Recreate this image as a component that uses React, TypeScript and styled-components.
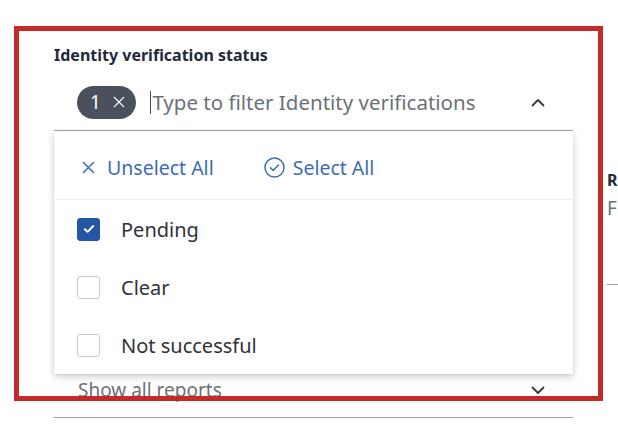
import React from "react";
import styled, { createGlobalStyle } from "styled-components";

const colors = {
  ink: "#1f2a3c",
  text: "#2f3338",
  muted: "#6b7079",
  chip: "#4a505c",
  link: "#3b6db5",
  check: "#2556a5",
  line: "#9aa1ad",
  divider: "#eceef1",
  box: "#c5cad2",
  highlight: "#c42a27",
};

const options = [
  { label: "Pending", checked: true },
  { label: "Clear", checked: false },
  { label: "Not successful", checked: false },
];

const CrossIcon = ({ size = 13, color = "currentColor" }: { size?: number; color?: string }) => (
  <svg width={size} height={size} viewBox="0 0 13 13" fill="none">
    <path d="M1.5 1.5l10 10M11.5 1.5l-10 10" stroke={color} strokeWidth="1.5" strokeLinecap="round" />
  </svg>
);

const CircleCheckIcon = () => (
  <svg width="21" height="21" viewBox="0 0 21 21" fill="none">
    <circle cx="10.5" cy="10.5" r="9.5" stroke="currentColor" strokeWidth="1.5" />
    <path d="M6.5 10.8l2.7 2.6 5.3-5.4" stroke="currentColor" strokeWidth="1.5" strokeLinecap="round" strokeLinejoin="round" />
  </svg>
);

const Chevron = ({ up }: { up?: boolean }) => (
  <svg width="14" height="9" viewBox="0 0 14 9" fill="none">
    <path
      d={up ? "M1.5 7.5L7 2l5.5 5.5" : "M1.5 1.5L7 7l5.5-5.5"}
      stroke="#35383d"
      strokeWidth="1.8"
      strokeLinecap="round"
      strokeLinejoin="round"
    />
  </svg>
);

const App = () => {
  return (
    <Page>
      <GlobalStyle />
      <Columns>
        <FilterColumn>
          <FieldLabel>Identity verification status</FieldLabel>
          <ComboWrap>
            <ComboField>
              <CountChip>
                1
                <CrossIcon size={12} color="#ffffff" />
              </CountChip>
              <Caret />
              <FilterInput placeholder="Type to filter Identity verifications" readOnly />
              <Chevron up />
            </ComboField>
            <Menu>
              <ActionRow>
                <ActionButton>
                  <CrossIcon />
                  Unselect All
                </ActionButton>
                <ActionButton $wide>
                  <CircleCheckIcon />
                  Select All
                </ActionButton>
              </ActionRow>
              <OptionList>
                {options.map((o) => (
                  <OptionRow key={o.label}>
                    <Checkbox $checked={o.checked}>
                      {o.checked && (
                        <svg width="12" height="10" viewBox="0 0 12 10" fill="none">
                          <path d="M1.8 5.2l2.8 2.6L10.2 2" stroke="#fff" strokeWidth="1.9" strokeLinecap="round" strokeLinejoin="round" />
                        </svg>
                      )}
                    </Checkbox>
                    {o.label}
                  </OptionRow>
                ))}
              </OptionList>
            </Menu>
          </ComboWrap>
          <SelectField>
            Show all reports
            <Chevron />
          </SelectField>
        </FilterColumn>
        <SideColumn>
          <FieldLabel>Report date</FieldLabel>
          <SideValue>From date</SideValue>
        </SideColumn>
      </Columns>
      <Highlight />
    </Page>
  );
};

export default App;

const GlobalStyle = createGlobalStyle`
  html, body {
    margin: 0;
    padding: 0;
    background: #ffffff;
    overflow: hidden;
  }
  body {
    font-family: "Noto Sans", "Liberation Sans", Arial, sans-serif;
    -webkit-font-smoothing: antialiased;
  }
`;

const Page = styled.div`
  position: relative;
  width: 618px;
  height: 424px;
  overflow: hidden;
  background: #ffffff;
`;

const Columns = styled.div`
  display: flex;
  gap: 34px;
  padding-left: 54px;
  width: 800px;
`;

const FilterColumn = styled.div`
  width: 519px;
  flex-shrink: 0;
  padding-top: 45px;
  display: flex;
  flex-direction: column;
`;

const FieldLabel = styled.div`
  font-size: 16px;
  line-height: 20px;
  font-weight: 700;
  color: ${colors.ink};
  white-space: nowrap;
`;

const ComboWrap = styled.div`
  position: relative;
  margin-top: 9px;
`;

const ComboField = styled.div`
  display: flex;
  align-items: center;
  height: 56px;
  border-bottom: 1px solid ${colors.line};
  padding: 0 28px 0 23px;
`;

const CountChip = styled.div`
  display: flex;
  align-items: center;
  gap: 12px;
  height: 33px;
  padding: 0 11px 0 13px;
  border-radius: 17px;
  background: ${colors.chip};
  color: #ffffff;
  font-size: 19px;
  margin-right: 14px;
`;

const Caret = styled.span`
  width: 1.5px;
  height: 23px;
  background: #4b4f55;
`;

const FilterInput = styled.input`
  flex: 1;
  min-width: 0;
  border: none;
  outline: none;
  padding: 0 0 0 1px;
  background: transparent;
  font-family: inherit;
  font-size: 20.5px;
  color: ${colors.text};

  &::placeholder {
    color: ${colors.muted};
  }
`;

const Menu = styled.div`
  position: absolute;
  top: 100%;
  left: 0;
  right: 0;
  z-index: 2;
  background: #ffffff;
  box-shadow: 0 3px 8px rgba(0, 0, 0, 0.18), 0 1px 2px rgba(0, 0, 0, 0.08);
`;

const ActionRow = styled.div`
  display: flex;
  align-items: center;
  height: 64px;
  padding: 4px 0 0 28px;
  gap: 50px;
  border-bottom: 1px solid ${colors.divider};
`;

const ActionButton = styled.div<{ $wide?: boolean }>`
  display: flex;
  align-items: center;
  gap: ${({ $wide }) => ($wide ? "8px" : "12px")};
  color: ${colors.link};
  font-size: 19.5px;
  cursor: pointer;
`;

const OptionList = styled.div`
  display: flex;
  flex-direction: column;
`;

const OptionRow = styled.label`
  display: flex;
  align-items: center;
  gap: 21px;
  height: 58px;
  padding-left: 23px;
  font-size: 20px;
  color: ${colors.text};
`;

const Checkbox = styled.span<{ $checked: boolean }>`
  display: flex;
  align-items: center;
  justify-content: center;
  width: 23px;
  height: 23px;
  box-sizing: border-box;
  border-radius: 3px;
  border: 1.5px solid ${({ $checked }) => ($checked ? colors.check : colors.box)};
  background: ${({ $checked }) => ($checked ? colors.check : "#ffffff")};
`;

const SelectField = styled.div`
  display: flex;
  align-items: center;
  justify-content: space-between;
  margin-top: 232px;
  height: 54px;
  padding: 0 28px 0 24px;
  border-bottom: 1px solid ${colors.line};
  font-size: 19px;
  color: ${colors.muted};
`;

const SideColumn = styled.div`
  width: 220px;
  flex-shrink: 0;
  padding-top: 170px;
  height: 114px;
  border-bottom: 1px solid ${colors.line};
  align-self: flex-start;
`;

const SideValue = styled.div`
  margin-top: 5px;
  font-size: 19px;
  color: ${colors.muted};
`;

const Highlight = styled.div`
  position: absolute;
  left: 14px;
  top: 26px;
  width: 589px;
  height: 375px;
  box-sizing: border-box;
  border: 5px solid ${colors.highlight};
  pointer-events: none;
  z-index: 3;
`;
